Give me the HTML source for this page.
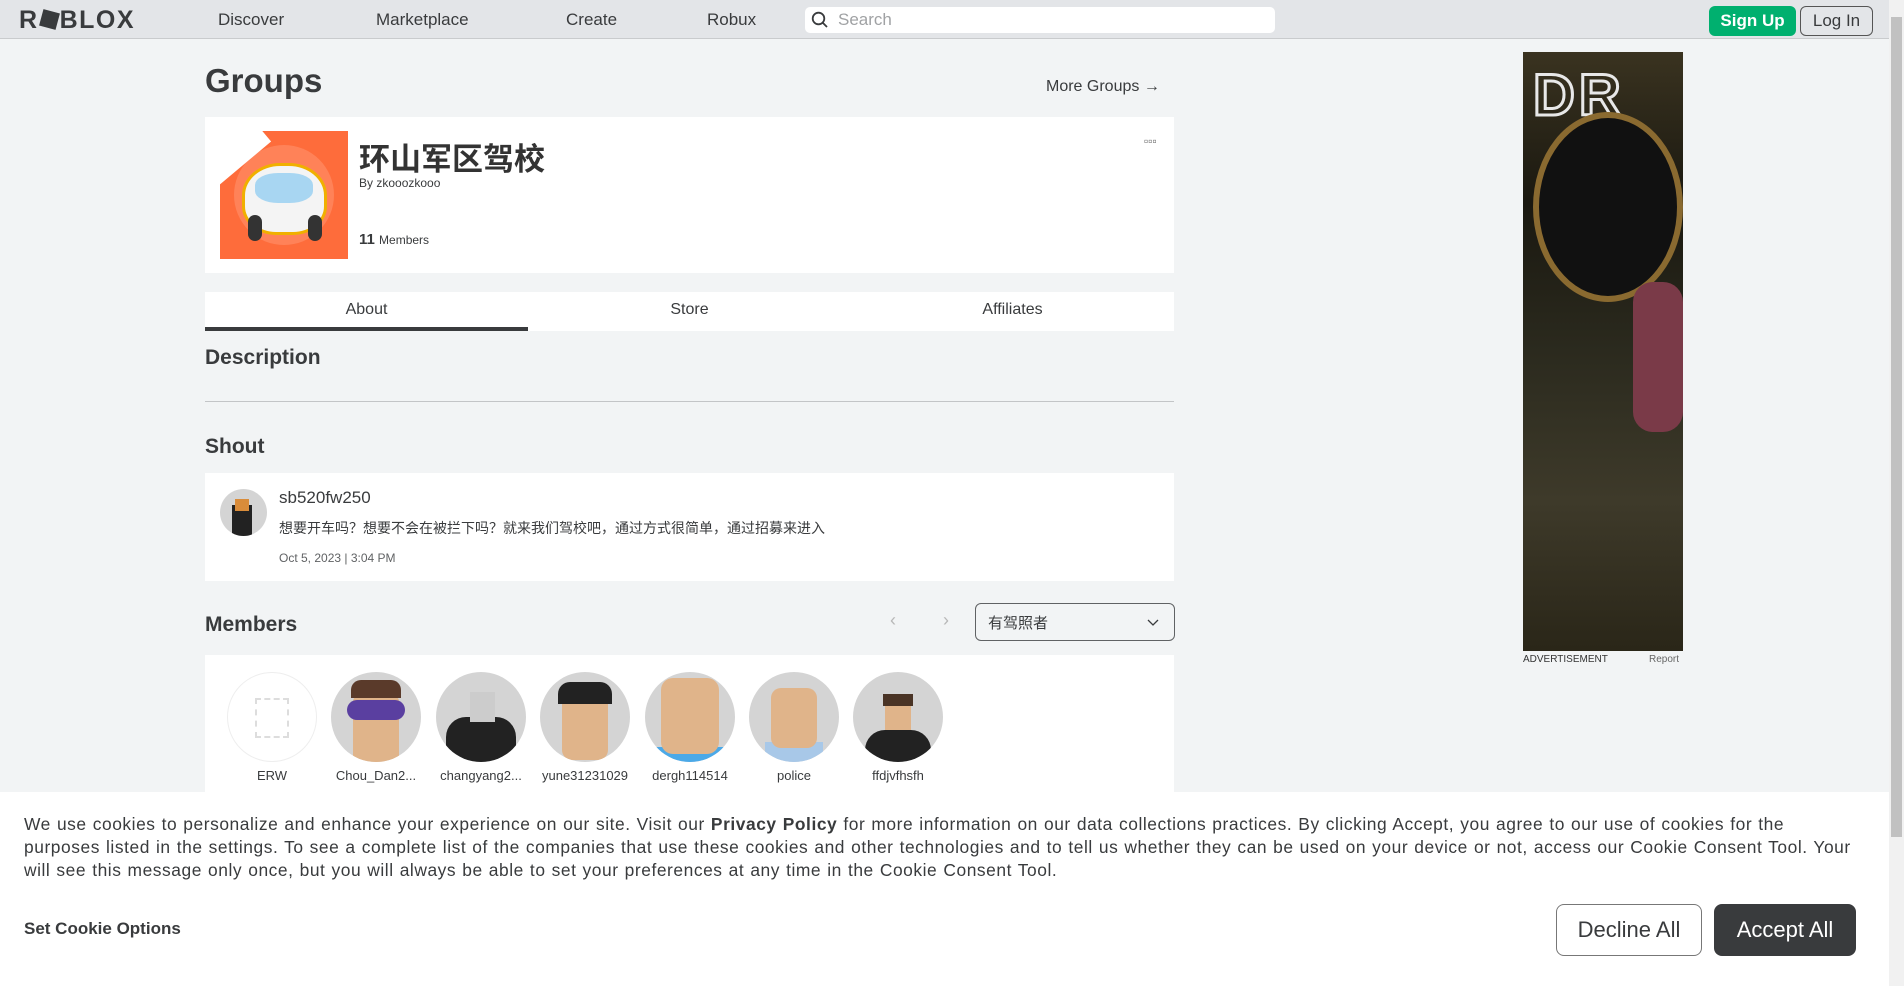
<!DOCTYPE html>
<html><head><meta charset="utf-8"><style>
*{box-sizing:border-box;margin:0;padding:0}
body{width:1904px;height:986px;overflow:hidden;background:#f2f4f5;font-family:"Liberation Sans","Noto Sans CJK SC",sans-serif;color:#393b3d;position:relative}
.abs{position:absolute}
.nav{left:0;top:0;width:1889px;height:39px;background:#e3e5e8;border-bottom:1px solid #c9cbcd}
.nav a{position:absolute;top:10px;font-size:17px;color:#393b3d}
.card{background:#fff}
.h2{font-size:22px;font-weight:bold}
.av{width:90px;height:90px;border-radius:50%;background:#d4d4d4;overflow:hidden}
.nm{font-size:13px;width:104px;text-align:center}
</style></head><body>
<div class="abs nav">
 <div class="abs" style="left:19px;top:6px;font-size:25px;font-weight:bold;letter-spacing:1.5px;color:#393b3d">R<span style="display:inline-block;width:17px;height:17px;background:#393b3d;transform:rotate(15deg);margin:0 2px"></span>BLOX</div>
 <a style="left:218px">Discover</a><a style="left:376px">Marketplace</a><a style="left:566px">Create</a><a style="left:707px">Robux</a>
 <div class="abs" style="left:805px;top:7px;width:470px;height:26px;background:#fff;border-radius:5px">
  <svg class="abs" style="left:6px;top:4px" width="18" height="18" viewBox="0 0 18 18"><circle cx="7.5" cy="7.5" r="5.8" fill="none" stroke="#393b3d" stroke-width="1.8"/><path d="M11.5 11.5L16 16" stroke="#393b3d" stroke-width="1.8"/></svg>
  <span class="abs" style="left:33px;top:3px;font-size:17px;color:#a0a2a4">Search</span></div>
 <div class="abs" style="left:1709px;top:6px;width:87px;height:30px;background:#00b06f;border-radius:6px;color:#fff;font-weight:bold;font-size:17px;text-align:center;line-height:30px">Sign Up</div>
 <div class="abs" style="left:1800px;top:6px;width:73px;height:30px;border:1px solid #555;border-radius:6px;font-size:17px;text-align:center;line-height:28px">Log In</div>
</div>
<div class="abs" style="left:1889px;top:0;width:15px;height:986px;background:#f1f1f1"><div class="abs" style="left:2px;top:17px;width:11px;height:820px;background:#c1c1c1"></div></div>

<div class="abs" style="left:205px;top:62px;font-size:33px;font-weight:bold">Groups</div>
<div class="abs" style="left:1046px;top:78px;font-size:16px">More Groups →</div>

<div class="abs card" style="left:205px;top:117px;width:969px;height:156px"></div>
<div class="abs" style="left:220px;top:131px;width:128px;height:128px;background:#fe6c3b;overflow:hidden">
 <div class="abs" style="left:14px;top:14px;width:100px;height:100px;border-radius:50%;background:#ff8258"></div>
 <div class="abs" style="left:-30px;top:-20px;width:70px;height:60px;background:#fff;transform:rotate(-40deg)"></div>
 <div class="abs" style="left:22px;top:32px;width:85px;height:72px;border-radius:45% 45% 40% 40%;background:#f4f4f4;border:3px solid #f0b000"></div>
 <div class="abs" style="left:35px;top:42px;width:58px;height:30px;border-radius:40%;background:#a8d6f2"></div>
 <div class="abs" style="left:28px;top:84px;width:14px;height:26px;border-radius:7px;background:#333"></div>
 <div class="abs" style="left:88px;top:84px;width:14px;height:26px;border-radius:7px;background:#333"></div>
</div>
<div class="abs" style="left:359px;top:134px;font-size:31px;font-weight:bold;color:#333">环山军区驾校</div>
<div class="abs" style="left:359px;top:176px;font-size:12px">By <span style="color:#393b3d">zkooozkooo</span></div>
<div class="abs" style="left:359px;top:231px;font-size:15px;font-weight:bold">11 <span style="font-size:12px;font-weight:normal">Members</span></div>
<div class="abs" style="left:1144px;top:134px;font-size:12px;color:#666">▫▫▫</div>

<div class="abs card" style="left:205px;top:292px;width:969px;height:39px"></div>
<div class="abs" style="left:205px;top:327px;width:323px;height:4px;background:#393b3d"></div>
<div class="abs" style="left:205px;top:301px;width:323px;text-align:center;font-size:16px">About</div>
<div class="abs" style="left:528px;top:301px;width:323px;text-align:center;font-size:16px">Store</div>
<div class="abs" style="left:851px;top:301px;width:323px;text-align:center;font-size:16px">Affiliates</div>

<div class="abs h2" style="left:205px;top:346px;font-size:21px">Description</div>
<div class="abs" style="left:205px;top:401px;width:969px;height:1px;background:#c3c5c7"></div>
<div class="abs h2" style="left:205px;top:435px;font-size:21px">Shout</div>

<div class="abs card" style="left:205px;top:473px;width:969px;height:108px"></div>
<div class="abs av" style="left:220px;top:489px;width:47px;height:47px"><div class="abs" style="left:12px;top:16px;width:20px;height:31px;background:#222"></div><div class="abs" style="left:15px;top:10px;width:14px;height:12px;background:#d98c3a"></div></div>
<div class="abs" style="left:279px;top:488px;font-size:17px">sb520fw250</div>
<div class="abs" style="left:279px;top:518px;font-size:14px">想要开车吗？想要不会在被拦下吗？就来我们驾校吧，通过方式很简单，通过招募来进入</div>
<div class="abs" style="left:279px;top:551px;font-size:12px;color:#606264">Oct 5, 2023 | 3:04 PM</div>

<div class="abs h2" style="left:205px;top:613px;font-size:21px">Members</div>
<div class="abs" style="left:890px;top:610px;font-size:18px;color:#b8b8b8">‹</div>
<div class="abs" style="left:943px;top:610px;font-size:18px;color:#b8b8b8">›</div>
<div class="abs" style="left:975px;top:603px;width:200px;height:38px;border:1px solid #606264;border-radius:6px;background:#f2f4f5">
 <span class="abs" style="left:12px;top:8px;font-size:15px">有驾照者</span>
 <svg class="abs" style="left:171px;top:15px" width="12" height="8" viewBox="0 0 12 8"><path d="M1 1l5 5 5-5" fill="none" stroke="#393b3d" stroke-width="1.3"/></svg></div>

<div class="abs card" style="left:205px;top:655px;width:969px;height:140px"></div>
<div class="abs av" style="left:227px;top:672px;background:#fff;border:1px solid #eee"><div class="abs" style="left:27px;top:25px;width:34px;height:40px;border:2px dashed #ddd"></div></div>
<div class="abs av" style="left:331px;top:672px"><div class="abs" style="left:22px;top:22px;width:46px;height:70px;background:#e0b48a;border-radius:8px"></div><div class="abs" style="left:16px;top:28px;width:58px;height:20px;background:#5a3fa0;border-radius:10px"></div><div class="abs" style="left:20px;top:8px;width:50px;height:18px;background:#5a3a2a;border-radius:10px 10px 0 0"></div></div>
<div class="abs av" style="left:436px;top:672px"><div class="abs" style="left:10px;top:45px;width:70px;height:50px;background:#222;border-radius:20px"></div><div class="abs" style="left:34px;top:20px;width:25px;height:30px;background:#ccc"></div></div>
<div class="abs av" style="left:540px;top:672px"><div class="abs" style="left:22px;top:18px;width:46px;height:70px;background:#e0b48a;border-radius:10px"></div><div class="abs" style="left:18px;top:10px;width:54px;height:22px;background:#222;border-radius:12px 12px 0 0"></div></div>
<div class="abs av" style="left:645px;top:672px"><div class="abs" style="left:10px;top:75px;width:70px;height:20px;background:#4ba9e8"></div><div class="abs" style="left:16px;top:6px;width:58px;height:76px;background:#e0b48a;border-radius:12px"></div></div>
<div class="abs av" style="left:749px;top:672px"><div class="abs" style="left:16px;top:70px;width:58px;height:25px;background:#a8c8e8"></div><div class="abs" style="left:22px;top:16px;width:46px;height:60px;background:#e0b48a;border-radius:10px"></div></div>
<div class="abs av" style="left:853px;top:672px"><div class="abs" style="left:12px;top:58px;width:66px;height:40px;background:#222;border-radius:20px 20px 0 0"></div><div class="abs" style="left:32px;top:30px;width:26px;height:28px;background:#e0b48a"></div><div class="abs" style="left:30px;top:22px;width:30px;height:12px;background:#4a3426"></div></div>
<div class="abs nm" style="left:220px;top:768px">ERW</div>
<div class="abs nm" style="left:324px;top:768px">Chou_Dan2...</div>
<div class="abs nm" style="left:429px;top:768px">changyang2...</div>
<div class="abs nm" style="left:533px;top:768px">yune31231029</div>
<div class="abs nm" style="left:638px;top:768px">dergh114514</div>
<div class="abs nm" style="left:742px;top:768px">police</div>
<div class="abs nm" style="left:846px;top:768px">ffdjvfhsfh</div>

<div class="abs" style="left:1523px;top:52px;width:160px;height:599px;background:linear-gradient(180deg,#3a3320 0%,#1a1810 25%,#2b2a1e 50%,#3e3a2a 75%,#2a2618 100%);overflow:hidden">
 <div class="abs" style="left:10px;top:10px;font-size:58px;font-weight:bold;color:transparent;-webkit-text-stroke:3px #e8e8e8;letter-spacing:4px">DR</div>
 <div class="abs" style="left:10px;top:60px;width:150px;height:190px;border-radius:50%;background:#111;border:6px solid #8a6a30"></div>
 <div class="abs" style="left:110px;top:230px;width:50px;height:150px;background:#7a3a48;border-radius:20px"></div>
</div>
<div class="abs" style="left:1523px;top:654px;font-size:10px;color:#333">ADVERTISEMENT</div>
<div class="abs" style="left:1649px;top:654px;font-size:10px;color:#666">Report</div>

<div class="abs" style="left:0;top:792px;width:1889px;height:194px;background:#fff"></div>
<div class="abs" style="left:24px;top:813px;width:1860px;font-size:17.4px;letter-spacing:0.55px;word-spacing:0.7px;line-height:23px;color:#393b3d;white-space:nowrap">We use cookies to personalize and enhance your experience on our site. Visit our <b>Privacy Policy</b> for more information on our data collections practices. By clicking Accept, you agree to our use of cookies for the<br>purposes listed in the settings. To see a complete list of the companies that use these cookies and other technologies and to tell us whether they can be used on your device or not, access our Cookie Consent Tool. Your<br>will see this message only once, but you will always be able to set your preferences at any time in the Cookie Consent Tool.</div>
<div class="abs" style="left:24px;top:919px;font-size:17px;font-weight:bold">Set Cookie Options</div>
<div class="abs" style="left:1556px;top:904px;width:146px;height:52px;border:1px solid #777;border-radius:8px;text-align:center;line-height:50px;font-size:22px">Decline All</div>
<div class="abs" style="left:1714px;top:904px;width:142px;height:52px;background:#393b3d;border-radius:8px;text-align:center;line-height:52px;font-size:22px;color:#fff">Accept All</div>
</body></html>
